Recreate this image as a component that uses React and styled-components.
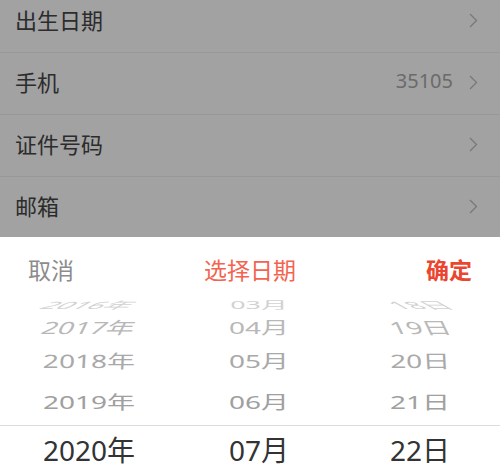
import React from 'react';
import styled, { createGlobalStyle } from 'styled-components';

const Global = createGlobalStyle`
  html, body { margin: 0; padding: 0; }
  body {
    width: 500px;
    height: 466px;
    overflow: hidden;
    background: #ffffff;
    font-family: "Noto Sans", "Noto Sans CJK SC", sans-serif;
  }
`;

const Page = styled.div`
  width: 500px;
  height: 466px;
  overflow: hidden;
`;

const List = styled.ul`
  list-style: none;
  margin: -9px 0 0;
  padding: 0;
  background: #ffffff;
`;

const Row = styled.li`
  height: 62px;
  box-sizing: border-box;
  border-bottom: 1px solid #f0f0f0;
  display: flex;
  align-items: center;
  padding: 0 22px 5px 15px;
`;

const Label = styled.span`
  flex: 1;
  font-family: "Noto Sans CJK SC", sans-serif;
  font-size: 22px;
  color: #464646;
  line-height: 1;
`;

const Value = styled.span`
  font-family: "Noto Sans", "Noto Sans CJK SC", sans-serif;
  font-size: 20px;
  color: #a9a9a9;
  margin-right: 16px;
  line-height: 1;
`;

const ChevronBox = styled.span`
  display: flex;
  margin-top: 3px;
`;

const Chevron = () => (
  <ChevronBox>
    <svg width="9" height="15" viewBox="0 0 9 15" fill="none">
      <polyline points="1,1 7.5,7.5 1,14" stroke="#bdbdbd" strokeWidth="1.3" strokeLinejoin="miter" />
    </svg>
  </ChevronBox>
);

const Mask = styled.div`
  position: fixed;
  inset: 0;
  background: rgba(0, 0, 0, 0.365);
`;

const Sheet = styled.div`
  position: fixed;
  left: 0;
  right: 0;
  bottom: 0;
  height: 229px;
  background: #ffffff;
  overflow: hidden;
  display: flex;
  flex-direction: column;
`;

const Header = styled.div`
  flex-shrink: 0;
  height: 55px;
  box-sizing: border-box;
  padding: 9px 28px 0;
  display: flex;
  align-items: center;
  justify-content: space-between;
  font-family: "Noto Sans CJK SC", sans-serif;
  font-size: 23px;
  line-height: 1;
`;

const HeaderButton = styled.span`
  color: ${(p) => p.$color};
  font-weight: ${(p) => (p.$bold ? 700 : 400)};
`;

const Title = styled.span`
  color: #f3634f;
`;

const Wheel = styled.div`
  flex-shrink: 0;
  display: grid;
  grid-template-columns: 178px 162px 160px;
  padding-bottom: ${(p) => p.$pad || 0}px;
  border-top: ${(p) => (p.$divider ? '1px solid #dcdcdc' : 'none')};
`;

const Column = styled.div`
  display: flex;
  flex-direction: column;
  align-items: center;
`;

const Item = styled.div`
  height: ${(p) => p.$h}px;
  line-height: ${(p) => p.$h}px;
  font-size: 28px;
  white-space: nowrap;
  color: ${(p) => p.$color};
  transform: scale(${(p) => p.$sx}, ${(p) => p.$sy}) skewX(${(p) => p.$skew}deg);
  transform-origin: center center;
`;

const slots = [
  { h: 26, sy: 0.36, sx: 0.96, skew: 34, color: '#d2d2d2' },
  { h: 18, sy: 0.6, sx: 1, skew: 16, color: '#b8b8b8' },
  { h: 50, sy: 0.66, sx: 1, skew: 2, color: '#a9a9a9' },
  { h: 32, sy: 0.66, sx: 1, skew: 0, color: '#a0a0a0' },
];

const columns = [
  { dir: -1, values: ['2016年', '2017年', '2018年', '2019年'], selected: '2020年' },
  { dir: 0, values: ['03月', '04月', '05月', '06月'], selected: '07月' },
  { dir: 1, values: ['18日', '19日', '20日', '21日'], selected: '22日' },
];

const rows = [
  { label: '出生日期' },
  { label: '手机', value: '35105' },
  { label: '证件号码' },
  { label: '邮箱' },
  { label: '地址' },
];

export default function App() {
  return (
    <Page>
      <Global />
      <List>
        {rows.map((r) => (
          <Row key={r.label}>
            <Label>{r.label}</Label>
            {r.value && <Value>{r.value}</Value>}
            <Chevron />
          </Row>
        ))}
      </List>
      <Mask />
      <Sheet>
        <Header>
          <HeaderButton $color="#8c8c8c">取消</HeaderButton>
          <Title>选择日期</Title>
          <HeaderButton $color="#ea452f" $bold>确定</HeaderButton>
        </Header>
        <Wheel $pad={7}>
          {columns.map((c, ci) => (
            <Column key={ci}>
              {c.values.map((v, i) => (
                <Item
                  key={v}
                  $h={slots[i].h}
                  $sy={slots[i].sy}
                  $sx={slots[i].sx}
                  $skew={slots[i].skew * c.dir}
                  $color={slots[i].color}
                >
                  {v}
                </Item>
              ))}
            </Column>
          ))}
        </Wheel>
        <Wheel $divider>
          {columns.map((c, ci) => (
            <Column key={ci}>
              <Item $h={48} $sy={1} $sx={1} $skew={0} $color="#333333">
                {c.selected}
              </Item>
            </Column>
          ))}
        </Wheel>
      </Sheet>
    </Page>
  );
}
